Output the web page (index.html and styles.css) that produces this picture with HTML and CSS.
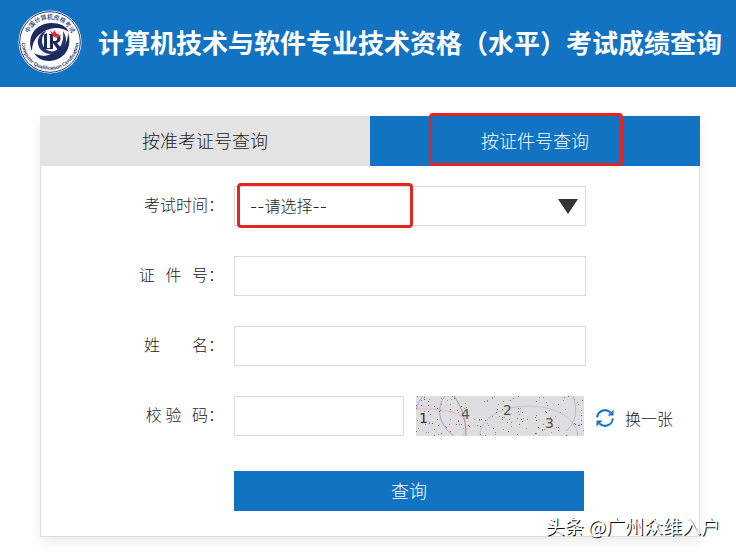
FILE: index.html
```html
<!DOCTYPE html>
<html lang="zh-CN">
<head>
<meta charset="utf-8">
<meta name="viewport" content="width=device-width, initial-scale=1">
<title>考试成绩查询</title>
<link rel="stylesheet" href="styles.css">
</head>
<body>
<header class="header">
  <svg class="logo" viewBox="0 0 64 64" aria-hidden="true">
    <defs>
      <path id="arc-top" d="M9 32a23 23 0 0 1 46 0"/>
      <path id="arc-bottom" d="M4 26a28.500 28.500 0 1 0 56 0"/>
    </defs>
    <circle cx="32" cy="32" r="31.500" fill="#fff"/>
    <circle cx="32" cy="32" r="30.300" fill="none" stroke="#26346c" stroke-width="1"/>
    <text class="logo-cn"><textPath href="#arc-top" startOffset="50%" text-anchor="middle">中国计算机资格考试</textPath></text>
    <text class="logo-en"><textPath href="#arc-bottom" startOffset="50%" text-anchor="middle">Computer Qualification Certification</textPath></text>
    <path d="M14 41C8 27 18 13 33 13c9 0 15 3 18 9-6-4-13-5-19-3-11 3-18 11-18 22Z" fill="#1c2860"/>
    <path d="M50 23c5 14-4 28-19 28-7 0-12-3-15-8 5 3 11 4 17 1 11-3 17-10 17-21Z" fill="#1c2860"/>
    <path d="M45 21c6 9 3 19-7 22-9 3-17-2-18-9-1-6 3-12 8-13-6 7-5 15 1 19 8 5 18-3 16-19Z" fill="#26346c"/>
    <path d="M25 25l4-2v15h2v1h-7v-1h2V25h-1ZM31 24h6c7 0 7 8 2 9l6 7h-5l-5-7v6h-4v-1h1V25h-1Z" fill="#1c2860"/>
    <path d="M35 26h2c3 0 3 5 0 5h-2Z" fill="#fff"/>
    <path d="M32 20l3 3 1-3 3 4 4 1-3 3-4-1-2-2Z" fill="#e02b35"/>
  </svg>
  <h1 class="title">计算机技术与软件专业技术资格（水平）考试成绩查询</h1>
</header>
<main class="panel">
  <nav class="tabs">
    <button type="button" class="tab">按准考证号查询</button>
    <button type="button" class="tab tab-active">按证件号查询<span class="mark mark-tab"></span></button>
  </nav>
  <form class="form">
    <div class="row">
      <label class="label" for="exam">考试时间：</label>
      <div class="field">
        <select id="exam" class="control"><option>--请选择--</option></select>
        <svg class="arrow" viewBox="0 0 20 15" aria-hidden="true"><path d="M0 0h20L10 15Z"/></svg>
        <span class="mark mark-select"></span>
      </div>
    </div>
    <div class="row">
      <label class="label" for="card">证&nbsp;&nbsp;&nbsp;件&nbsp;&nbsp;&nbsp;号：</label>
      <div class="field"><input id="card" class="control" type="text"></div>
    </div>
    <div class="row">
      <label class="label" for="name">姓　　名：</label>
      <div class="field"><input id="name" class="control" type="text"></div>
    </div>
    <div class="row row-code">
      <label class="label" for="code">校&nbsp;验&nbsp;&nbsp;&nbsp;码：</label>
      <div class="code">
        <input id="code" class="control" type="text">
        <svg class="captcha" viewBox="0 0 168 40" role="img" aria-label="校验码">
          <rect width="168" height="40" fill="#dedee0"/>
          <g fill="none" stroke-width="1">
            <path d="M0 14Q2 5 7 0" stroke="#b8a4dc"/>
            <path d="M0 13C20 13 43 13 49 25c2 5 0 11-2 15" stroke="#e9bfc4"/>
            <path d="M29 0C20 11 22 29 38 40" stroke="#a0a6c6"/>
            <path d="M38 0C46 11 50 24 50 40" stroke="#a98f8c"/>
            <path d="M64 40C64 2 156-2 162 40" stroke="#b7c5dd"/>
            <path d="M157 0c5 14 3 27-7 35" stroke="#b2b7de"/>
          </g>
          <g id="specks"></g>
          <g class="digits">
            <text x="3" y="27" fill="#333326">1</text>
            <text x="45" y="23" fill="#5b5951">4</text>
            <text x="87" y="19" fill="#55552a">2</text>
            <text x="129" y="32" fill="#55553a">3</text>
          </g>
        </svg>
        <button type="button" class="refresh">
          <svg class="refresh-icon" viewBox="0 0 18 18" aria-hidden="true">
            <path d="M1.200 8.500A7.800 7.800 0 0 1 14.500 3.500M16.800 9.500A7.800 7.800 0 0 1 3.500 14.500" fill="none" stroke="#1874bd" stroke-width="2"/>
            <path d="M17.500.5v6H11.500ZM.5 17.500V11.500H6.500Z" fill="#1874bd"/>
          </svg>
          换一张
        </button>
      </div>
    </div>
    <div class="actions"><button type="submit" class="submit">查询</button></div>
  </form>
</main>
<div class="watermark">头条 @广州众维入户</div>
<script src="captcha.js"></script>
</body>
</html>
```
FILE: styles.css
```css
* {
  box-sizing: border-box;
}

body {
  position: relative;
  margin: 0;
  background: #fff;
  color: #222;
  font: 300 16px/24px "Noto Sans CJK SC", sans-serif;
}

button,
input,
select {
  font: inherit;
  color: inherit;
}

button {
  padding: 0;
  border: 0;
  background: none;
}

.header {
  display: flex;
  align-items: center;
  gap: 16px;
  padding: 10px 0 13px 18px;
  background: #1173c2;
}

.logo {
  flex: none;
  width: 64px;
  height: 64px;
}

.logo-cn {
  font-size: 6px;
  font-weight: 500;
  fill: #26346c;
}

.logo-en {
  font: 700 5px "Liberation Sans", sans-serif;
  fill: #26346c;
}

.title {
  margin: 0;
  color: #fff;
  font-size: 26px;
  line-height: 40px;
  font-weight: 700;
  white-space: nowrap;
}

.panel {
  margin: 29px 36px 15px 40px;
  border: 1px solid #ddd;
  border-top: 0;
  box-shadow: 0 5px 12px rgba(0, 0, 0, 0.08);
}

.tabs {
  display: grid;
  grid-template-columns: 1fr 1fr;
  margin: 0 -1px;
}

.tab {
  position: relative;
  height: 50px;
  padding-bottom: 2px;
  background: #e3e3e3;
  font-size: 18px;
}

.tab-active {
  background: #1173c2;
  color: #fff;
}

.mark {
  position: absolute;
  border: 3px solid #e5261f;
  border-radius: 4px;
  pointer-events: none;
}

.mark-tab {
  top: -3px;
  bottom: 0;
  left: 59px;
  right: 77px;
}

.mark-select {
  top: -3px;
  bottom: -2px;
  left: 3px;
  width: 176px;
}

.form {
  display: grid;
  gap: 30px;
  padding: 20px 0 25px;
}

.row {
  display: grid;
  grid-template-columns: 183px 1fr;
  column-gap: 10px;
  padding-right: 113px;
}

.row-code {
  padding-right: 26px;
}

.label {
  line-height: 36px;
  text-align: right;
  white-space: nowrap;
}

.field {
  position: relative;
}

.control {
  display: block;
  width: 100%;
  height: 40px;
  padding: 0 15px;
  border: 1px solid #d9d9d9;
  border-radius: 0;
  background: #fff;
  font-family: Inter, "Noto Sans CJK SC", sans-serif;
  appearance: none;
}

.arrow {
  position: absolute;
  top: 13px;
  right: 8px;
  width: 20px;
  height: 15px;
  fill: #333;
  pointer-events: none;
}

.code {
  display: flex;
}

.code .control {
  flex: 1;
  min-width: 0;
}

.captcha {
  flex: none;
  width: 168px;
  height: 40px;
  margin: 0 12px;
}

.digits {
  font: 400 14px "DejaVu Sans", sans-serif;
}

.refresh {
  display: flex;
  align-items: center;
  gap: 11px;
  padding-top: 3px;
  white-space: nowrap;
}

.refresh-icon {
  width: 18px;
  height: 18px;
}

.actions {
  margin-top: 5px;
  padding: 0 115px 0 193px;
}

.submit {
  display: block;
  width: 100%;
  height: 40px;
  padding-bottom: 2px;
  background: #1173c2;
  color: #fff;
  font-size: 18px;
}

.watermark {
  position: absolute;
  right: 16px;
  bottom: 14px;
  color: #fff;
  font-size: 19px;
  font-weight: 400;
  text-shadow: 1px 1px 0 #111;
  white-space: nowrap;
}
```
FILE: captcha.js
```js
// Scatters the noise specks over the verification image, always in the same pattern.
const specks = document.getElementById("specks");
const colors = ["#c65460", "#6a6f9c", "#65a480", "#c87f7c", "#666", "#a380ae"];
let seed = 17;
function next() {
  seed = (seed * 16807) % 2147483647;
  return seed / 2147483647;
}
for (let i = 0; i < 160; i++) {
  const dot = document.createElementNS("http://www.w3.org/2000/svg", "rect");
  dot.setAttribute("x", Math.floor(next() * 168));
  dot.setAttribute("y", Math.floor(next() * 40));
  dot.setAttribute("width", 1);
  dot.setAttribute("height", 1);
  dot.setAttribute("fill", colors[i % colors.length]);
  specks.appendChild(dot);
}
```
